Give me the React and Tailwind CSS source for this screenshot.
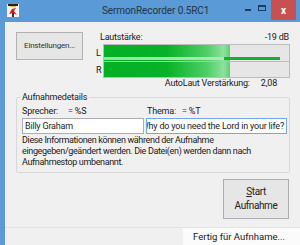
import React from "react";

const font = { fontFamily: 'Roboto, "Liberation Sans", Arial, sans-serif' };

function AppIcon() {
  return (
    <svg width="12" height="13" viewBox="0 0 12 13">
      <rect x="0" y="0" width="12" height="13" fill="#f4f4f4" />
      <rect x="1" y="0" width="10" height="2" fill="#222" />
      <rect x="3" y="2" width="6" height="1" fill="#e8c12a" />
      <path d="M2 10 L5 5 L9 4 L7 7 L10 11 L6 9 Z" fill="#d4201c" />
      <rect x="5" y="9" width="2" height="4" fill="#333" />
    </svg>
  );
}

function MeterBar({ peak, className }) {
  return (
    <div className={`relative flex-1 bg-[#e6e6e6] border border-[#bcbcbc] overflow-hidden ${className}`}>
      <div className="h-full w-[68%] bg-[linear-gradient(90deg,#06b025_0%,#08b228_50%,#4fcf66_82%,#8ee29d_95%,#5ccf70_100%)]" />
      {peak && (
        <div className="absolute left-0 bottom-[1px] h-[3px] w-[95%] bg-[linear-gradient(90deg,#8fe39f_0%,#a9eab5_68%,#14b031_68%,#14b031_100%)]" />
      )}
    </div>
  );
}

export default function App() {
  return (
    <div className="w-[300px] h-[245px] overflow-hidden bg-[#5a9ad6] flex flex-col text-[#1a1a1a]" style={font}>
      {/* TITLE BAR */}
      <div className="w-[300px] h-[22px] flex items-start shrink-0">
        <div className="w-[19px] pl-[7px] pt-[4px] shrink-0">
          <AppIcon />
        </div>
        <div className="w-[222px] shrink-0 pl-[83px] text-left text-[10px] tracking-[-0.1px] leading-[21px] text-[#243447] whitespace-nowrap">
          SermonRecorder 0.5RC1
        </div>
        <div className="w-[14px] h-[20px] shrink-0 flex items-center justify-center">
          <div className="w-[6px] h-[2px] bg-[#1d3c5f]" />
        </div>
        <div className="w-[14px] h-[20px] shrink-0 flex items-start justify-center pt-[5px]">
          <div className="w-[8px] h-[6px] border border-[#1d3c5f] border-t-2" />
        </div>
        <div className="ml-[2px] w-[25px] h-[20px] shrink-0 bg-[#c75050] flex items-center justify-center text-white text-[10px] font-bold">
          x
        </div>
      </div>

      <div className="flex flex-1">
        <div className="w-[5px] bg-[#5a9ad6] shrink-0" />

        {/* CLIENT */}
        <div className="flex-1 bg-[#f0f0f0] flex flex-col text-[9px] tracking-[-0.2px]">
          <div className="flex h-[69px] shrink-0">
            <button className="ml-[11px] mt-[10px] w-[67px] h-[28px] shrink-0 bg-[#e6e6e6] border border-[#b2b2b2] text-[8px] text-[#333]">
              Einstellungen...
            </button>

            <div className="ml-[13px] mt-[10px] w-[194px] shrink-0 flex flex-col">
              <div className="flex h-[12px] items-center">
                <span className="pl-[4px]">Lautstärke:</span>
                <span className="ml-auto pr-[1px]">-19 dB</span>
              </div>
              <div className="flex h-[18px]">
                <span className="w-[7px] leading-[18px]">L</span>
                <MeterBar peak className="h-[18px]" />
              </div>
              <div className="flex h-[16px]">
                <span className="w-[7px] leading-[16px]">R</span>
                <MeterBar className="h-[16px] border-t-0" />
              </div>
              <div className="flex justify-end items-center h-[12px] pr-[13px]">
                <span>AutoLaut Verstärkung:</span>
                <span className="ml-[11px]">2,08</span>
              </div>
            </div>
          </div>

          {/* AUFNAHMEDETAILS */}
          <fieldset className="ml-[11px] w-[274px] h-[82px] border border-[#d8d8d8] rounded-[2px] shrink-0">
            <legend className="ml-[3px] px-[2px] leading-[12px]">Aufnahmedetails</legend>
            <div className="flex pl-[5px] mt-[2px] leading-[12px]">
              <span className="w-[46px]">Sprecher:</span>
              <span className="w-[79px]">= %S</span>
              <span className="w-[35px]">Thema:</span>
              <span>= %T</span>
            </div>
            <div className="flex pl-[5px] mt-[1px] gap-[2px]">
              <div className="w-[122px] h-[16px] bg-white border border-[#abadb3] leading-[14px] px-[2px] overflow-hidden whitespace-nowrap">
                Billy Graham
              </div>
              <div className="w-[141px] h-[16px] bg-white border border-[#6fa9e6] leading-[14px] overflow-hidden whitespace-nowrap flex justify-end pr-[2px]">
                <span className="shrink-0">Why do you need the Lord in your life?</span>
              </div>
            </div>
            <p className="pl-[5px] mt-[1px] leading-[11px] tracking-[-0.35px] whitespace-nowrap">
              Diese Informationen können während der Aufnahme
              <br />
              eingegeben/geändert werden. Die Datei(en) werden dann nach
              <br />
              Aufnahmestop umbenannt.
            </p>
          </fieldset>

          <button className="ml-[218px] mt-[6px] w-[66px] h-[40px] shrink-0 bg-[#e6e6e6] border border-[#adadad] text-[10px] tracking-[-0.4px] leading-[14px] text-[#222]">
            <span className="underline">S</span>tart
            <br />
            Aufnahme
          </button>

          <div className="mt-[8px] flex-1 flex border-t border-[#e2e2e2]">
            <div className="w-[178px] shrink-0" />
            <div className="flex-1 bg-[#fbfbfb] text-[9.5px] tracking-normal leading-[17px] pl-[10px] whitespace-nowrap">
              Fertig für Aufnhame...
            </div>
          </div>
        </div>
      </div>
    </div>
  );
}
